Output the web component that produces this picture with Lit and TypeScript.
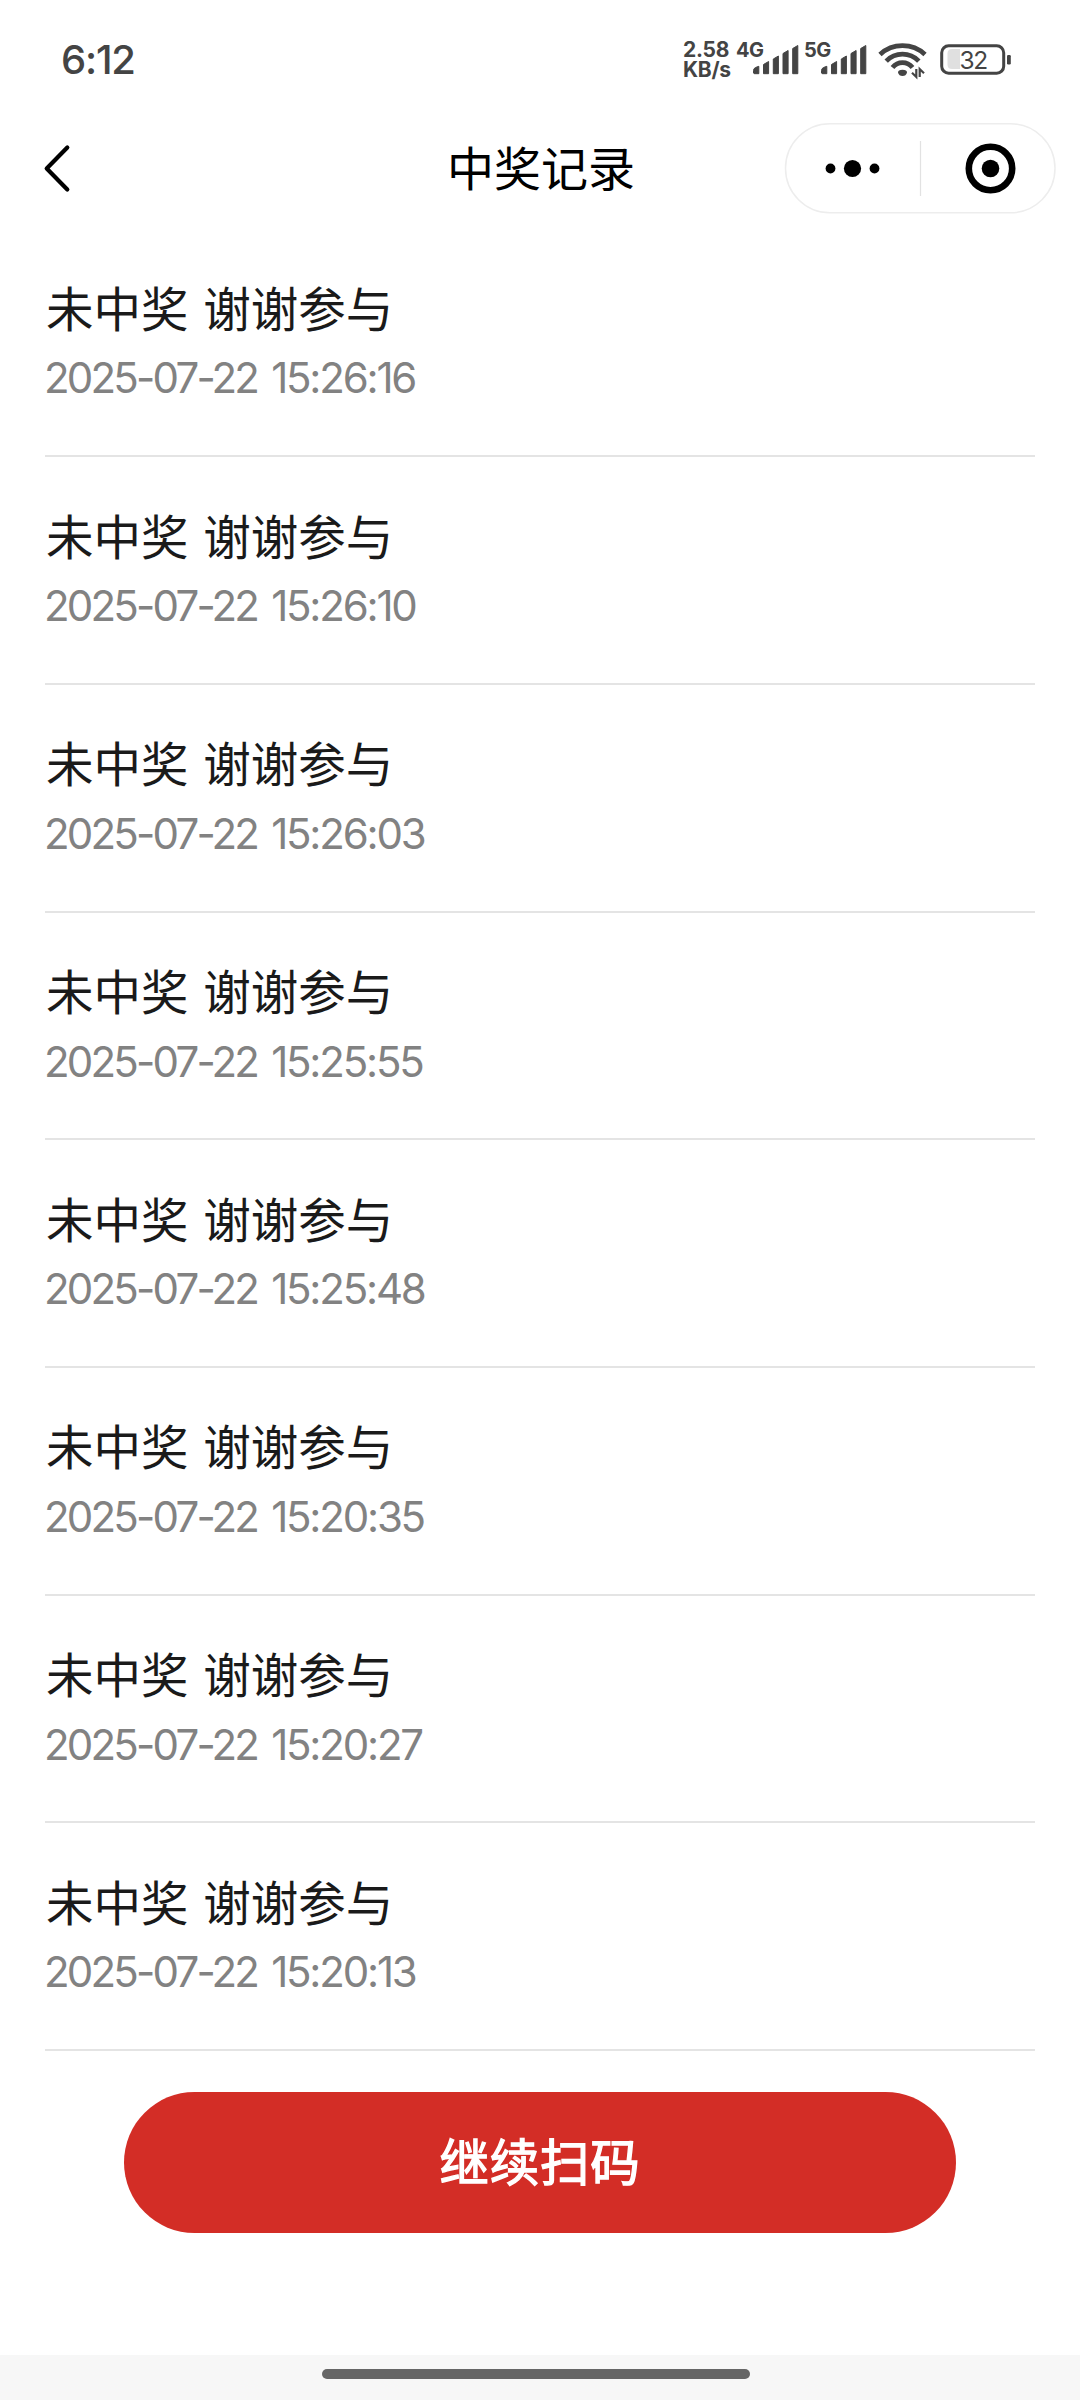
import { LitElement, html, css, svg } from "lit";
import { customElement } from "lit/decorators.js";

const RECORDS = [
  ["2025-07-22", "15:26:16"],
  ["2025-07-22", "15:26:10"],
  ["2025-07-22", "15:26:03"],
  ["2025-07-22", "15:25:55"],
  ["2025-07-22", "15:25:48"],
  ["2025-07-22", "15:20:35"],
  ["2025-07-22", "15:20:27"],
  ["2025-07-22", "15:20:13"],
];

const bars = svg`
  <path d="M17.500 33V30.500Q17.500 28.500 19.500 27.500L22.800 26.300V33.700H18.200Z
    M27.500 33.700V24.500L32.600 21.500V33.700Z
    M37.300 33.700V19L42.400 16V33.700Z
    M47 33.700V13.500L52.100 10.500V33.700Z
    M56.700 33.700V8.500L61.800 5.500V33.700Z"
    fill="#444" stroke="#444" stroke-width="1" stroke-linejoin="round"/>`;

@customElement("status-bar")
export class StatusBar extends LitElement {
  static styles = css`
    :host {
      display: flex;
      justify-content: space-between;
      height: 120px;
      padding: 0 67px 0 61px;
      box-sizing: border-box;
      color: #444;
      font-family: Inter, "Noto Sans", sans-serif;
    }
    .time {
      margin-top: 36px;
      font-size: 40px;
      line-height: 48px;
      font-weight: 500;
      letter-spacing: -1.2px;
    }
    .icons { display: flex; padding-top: 40px; }
    .speed {
      width: 53px;
      font-size: 21px;
      font-weight: 700;
      line-height: 20px;
      letter-spacing: -0.3px;
      white-space: nowrap;
    }
    .speed div { height: 20px; }
    .signal { width: 68px; height: 40px; overflow: visible; }
    .signal text { font: 700 20px Inter, sans-serif; letter-spacing: -0.5px; fill: #444; }
    .wifi { width: 52px; height: 40px; margin-left: 4px; }
    .battery { width: 73px; height: 40px; margin-left: 12px; }
    .battery text { font: 400 24.500px Inter, sans-serif; letter-spacing: -1.500px; fill: #444; }
  `;

  render() {
    return html`
      <div class="time">6:12</div>
      <div class="icons">
        <div class="speed"><div>2.58</div><div>KB/s</div></div>
        <svg class="signal" viewBox="0 0 68 40"><text x="0" y="17">4G</text>${bars}</svg>
        <svg class="signal" viewBox="0 0 68 40"><text x="0" y="17">5G</text>${bars}</svg>
        <svg class="wifi" viewBox="0 0 52 40">
          <g fill="none" stroke="#444" stroke-width="4.800">
            <path d="M4 14.500Q13.500 5.700 26.500 5.700T49 14.500" />
            <path d="M10.200 21.100Q17 14.200 26.500 14.200T42.800 21.100" />
            <path d="M16.500 27.600Q20.500 22.600 26.500 22.600T36.500 27.600" />
          </g>
          <path d="M22 32.500Q22 29.700 26.500 29.700T31 32.500Q30 36 26.500 36T22 32.500Z" fill="#444" />
          <path d="M40.300 29V37L36 32.800M43.700 37V29L48 33.200" fill="none" stroke="#444" stroke-width="2.200" />
        </svg>
        <svg class="battery" viewBox="0 0 73 40">
          <path d="M12 9H20V29H12Q7.500 29 7.500 24.500V13.500Q7.500 9 12 9Z" fill="#e0e0e0" />
          <rect x="1.700" y="5.800" width="62" height="27.400" rx="7" fill="none" stroke="#444" stroke-width="3" />
          <rect x="67" y="15" width="3.800" height="9.500" rx="1.200" fill="#444" />
          <text x="19.500" y="28.500">32</text>
        </svg>
      </div>
    `;
  }
}

@customElement("nav-header")
export class NavHeader extends LitElement {
  static styles = css`
    :host {
      display: grid;
      grid-template-columns: 1fr auto 1fr;
      align-items: center;
      height: 96px;
      padding: 0 24px;
    }
    .back { width: 60px; height: 60px; margin-left: 4px; }
    .title {
      padding: 0 0 5px 2px;
      font-size: 47px;
      line-height: 60px;
      color: #000;
      font-family: "Noto Sans CJK SC", sans-serif;
    }
    .capsule { width: 272px; height: 91px; justify-self: end; }
  `;

  render() {
    return html`
      <svg class="back" viewBox="0 0 60 60">
        <path d="M39.300 9.500L18.700 30.500L39.300 51.500" fill="none" stroke="#000" stroke-width="4.200" stroke-linecap="round" stroke-linejoin="round" />
      </svg>
      <div class="title">中奖记录</div>
      <svg class="capsule" viewBox="0 0 272 91">
        <rect x="1.500" y="0.800" width="269.500" height="89" rx="44.500" fill="#fff" stroke="#ededed" stroke-width="1.500" />
        <path d="M136.500 18V73" stroke="#e2e2e2" stroke-width="1.200" />
        <g>
          <circle cx="46.500" cy="45.500" r="4.900" />
          <circle cx="68.500" cy="45.500" r="8.600" />
          <circle cx="90.500" cy="45.500" r="4.900" />
          <circle cx="206.500" cy="45.500" r="8.800" />
        </g>
        <circle cx="206.500" cy="45.500" r="21.700" fill="none" stroke="#000" stroke-width="6.600" />
      </svg>
    `;
  }
}

@customElement("app-root")
export class AppRoot extends LitElement {
  static styles = css`
    :host {
      display: flex;
      flex-direction: column;
      width: 1080px;
      height: 2400px;
      background: #fff;
      overflow: hidden;
      font-family: "Noto Sans CJK SC", sans-serif;
    }
    .list { margin: 13.600px 45px 0; }
    .row {
      box-sizing: border-box;
      height: 227.700px;
      padding-top: 47.400px;
      border-bottom: 2px solid #e4e4e4;
    }
    .name {
      padding-left: 1px;
      font-size: 47.500px;
      line-height: 60px;
      word-spacing: 4px;
      color: #1a1a1a;
    }
    .stamp {
      display: flex;
      gap: 14px;
      margin-top: 16.500px;
      margin-left: -1px;
      font-family: Inter, "Noto Sans", sans-serif;
      font-size: 42px;
      line-height: 50px;
      color: #828282;
    }
    .day { letter-spacing: -2.800px; }
    .clock { letter-spacing: -2.200px; }
    .scan {
      align-self: center;
      width: 832px;
      height: 141px;
      margin: 41.400px 0 0;
      padding: 0 0 6px;
      border: 0;
      border-radius: 71px;
      background: #d32d26;
      color: #fff;
      font-family: inherit;
      font-size: 49.500px;
      letter-spacing: 0.8px;
      -webkit-text-stroke: 1.300px #fff;
    }
    .home {
      display: flex;
      box-sizing: border-box;
      height: 45px;
      margin-top: auto;
      padding: 13.500px 330px 0 322px;
      background: #f7f7f7;
    }
    .pill { flex: 1; height: 10.500px; border-radius: 6px; background: #666; }
  `;

  render() {
    return html`
      <status-bar></status-bar>
      <nav-header></nav-header>
      <div class="list">
        ${RECORDS.map(
          ([day, clock]) => html`<div class="row">
            <div class="name">未中奖 谢谢参与</div>
            <div class="stamp"><span class="day">${day}</span><span class="clock">${clock}</span></div>
          </div>`
        )}
      </div>
      <button class="scan">继续扫码</button>
      <div class="home"><div class="pill"></div></div>
    `;
  }
}
